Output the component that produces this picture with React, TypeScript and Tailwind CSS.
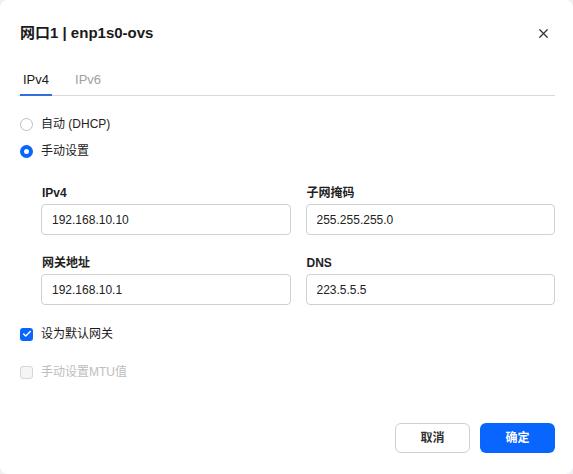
import React, { useState } from 'react';
import { X, Check } from 'lucide-react';

const Field: React.FC<{ label: string; value: string }> = ({ label, value }) => (
  <div className="flex flex-col">
    <label className="text-[12px] font-bold text-[#1f1f1f] leading-[16px] mb-[3px] ml-[1px]">{label}</label>
    <input
      readOnly
      value={value}
      className="h-[31px] w-full rounded-[4px] border border-[#d0d0d0] bg-white px-[10px] text-[12px] text-[#222] outline-none"
    />
  </div>
);

const App: React.FC = () => {
  const [mode, setMode] = useState<'dhcp' | 'manual'>('manual');
  const [gateway, setGateway] = useState(true);

  return (
    <div
      className="w-[573px] h-[474px] bg-[#eef0f3]"
      style={{ fontFamily: '"Liberation Sans", Arial, "Noto Sans CJK SC", sans-serif' }}
    >
      <div className="w-full h-full bg-white rounded-[8px] flex flex-col px-[18px]">
        {/* header */}
        <div className="flex items-center justify-between pt-[23px] pl-[2px] pr-[4px]">
          <h2 className="text-[15px] font-bold text-[#1a1a1a] leading-[20px]">网口1 | enp1s0-ovs</h2>
          <X className="w-[15px] h-[15px] text-[#333]" strokeWidth={2} />
        </div>

        {/* tabs */}
        <div className="mt-[29px] flex border-b border-[#d9d9d9]">
          <div className="relative ml-[2px] px-[3px] pb-[7px] text-[13px] text-[#1a1a1a] leading-[16px]">
            IPv4
            <div className="absolute left-0 right-0 bottom-[-1px] h-[2px] bg-[#2f6fe0]" />
          </div>
          <div className="ml-[23px] pb-[7px] text-[13px] text-[#a0a0a0] leading-[16px]">IPv6</div>
        </div>

        {/* radios */}
        <div className="mt-[20px] flex flex-col gap-[11px] pl-[2px]">
          <label className="flex items-center gap-[8px] text-[12px] text-[#222] leading-[16px]" onClick={() => setMode('dhcp')}>
            <span
              className={
                mode === 'dhcp'
                  ? 'w-[13px] h-[13px] rounded-full border-[4px] border-[#0866ff] bg-white'
                  : 'w-[13px] h-[13px] rounded-full border border-[#bfbfbf] bg-white'
              }
            />
            自动 (DHCP)
          </label>
          <label className="flex items-center gap-[8px] text-[12px] text-[#222] leading-[16px]" onClick={() => setMode('manual')}>
            <span
              className={
                mode === 'manual'
                  ? 'w-[13px] h-[13px] rounded-full border-[4px] border-[#0866ff] bg-white'
                  : 'w-[13px] h-[13px] rounded-full border border-[#bfbfbf] bg-white'
              }
            />
            手动设置
          </label>
        </div>

        {/* fields */}
        <div className="mt-[26px] ml-[23px] grid grid-cols-2 gap-x-[15px] gap-y-[20px]">
          <Field label="IPv4" value="192.168.10.10" />
          <Field label="子网掩码" value="255.255.255.0" />
          <Field label="网关地址" value="192.168.10.1" />
          <Field label="DNS" value="223.5.5.5" />
        </div>

        {/* checkboxes */}
        <div className="mt-[21px] flex flex-col gap-[22px] pl-[2px]">
          <label className="flex items-center gap-[8px] text-[12px] text-[#1a1a1a] leading-[16px]" onClick={() => setGateway(!gateway)}>
            <span className="w-[13px] h-[13px] rounded-[3px] bg-[#0866ff] flex items-center justify-center">
              {gateway && <Check className="w-[10px] h-[10px] text-white" strokeWidth={3.5} />}
            </span>
            设为默认网关
          </label>
          <label className="flex items-center gap-[8px] text-[12px] text-[#bdbdbd] leading-[16px]">
            <span className="w-[13px] h-[13px] rounded-[3px] border border-[#d6d6d6] bg-[#f5f5f5]" />
            手动设置MTU值
          </label>
        </div>

        {/* footer */}
        <div className="mt-auto mb-[21px] flex justify-end gap-[10px]">
          <button className="w-[75px] h-[30px] rounded-[6px] border border-[#cfcfcf] bg-white text-[12px] font-bold text-[#333]">
            取消
          </button>
          <button className="w-[75px] h-[30px] rounded-[6px] bg-[#0866ff] text-[12px] font-bold text-white">
            确定
          </button>
        </div>
      </div>
    </div>
  );
};

export default App;
